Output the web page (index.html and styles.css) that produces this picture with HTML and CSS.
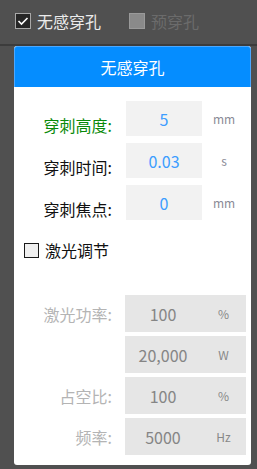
FILE: index.html
```html
<!DOCTYPE html>
<html lang="zh">
<head>
    <meta charset="UTF-8">
    <title>无感穿孔</title>
    <link rel="stylesheet" href="styles.css">
</head>
<body>
    <div class="topbar">
        <label class="top-check">
            <span class="box checked">
                <svg width="12" height="10" viewBox="0 0 12 10"><path d="M1.5 5 L4.5 8 L10.5 2" fill="none" stroke="#fff" stroke-width="1.6"/></svg>
            </span>
            <span>无感穿孔</span>
        </label>
        <label class="top-check disabled">
            <span class="box"></span>
            <span>预穿孔</span>
        </label>
    </div>

    <div class="panel">
        <div class="panel-head">无感穿孔</div>
        <div class="panel-body">
            <div class="rows">
                <div class="row">
                    <div class="label green">穿刺高度:</div>
                    <div class="field">
                        <div class="value">5</div>
                        <div class="unit">mm</div>
                    </div>
                </div>
                <div class="row">
                    <div class="label">穿刺时间:</div>
                    <div class="field">
                        <div class="value">0.03</div>
                        <div class="unit">s</div>
                    </div>
                </div>
                <div class="row">
                    <div class="label">穿刺焦点:</div>
                    <div class="field">
                        <div class="value">0</div>
                        <div class="unit">mm</div>
                    </div>
                </div>
            </div>

            <label class="check">
                <span class="check-box"></span>
                <span>激光调节</span>
            </label>

            <div class="rows off">
                <div class="row">
                    <div class="label">激光功率:</div>
                    <div class="field">
                        <div class="value">100</div>
                        <div class="unit">%</div>
                    </div>
                </div>
                <div class="row">
                    <div class="label"></div>
                    <div class="field">
                        <div class="value">20,000</div>
                        <div class="unit">W</div>
                    </div>
                </div>
                <div class="row">
                    <div class="label">占空比:</div>
                    <div class="field">
                        <div class="value">100</div>
                        <div class="unit">%</div>
                    </div>
                </div>
                <div class="row">
                    <div class="label">频率:</div>
                    <div class="field">
                        <div class="value">5000</div>
                        <div class="unit">Hz</div>
                    </div>
                </div>
            </div>
        </div>
    </div>
</body>
</html>
```

FILE: styles.css
```css
* {
    margin: 0;
    padding: 0;
    box-sizing: border-box;
}

body {
    background: #505050;
    font-family: "Noto Sans CJK SC", "Noto Sans", sans-serif;
    width: 257px;
    height: 469px;
    overflow: hidden;
}

.topbar {
    height: 46px;
    display: flex;
    align-items: center;
    padding: 0 0 2px 15px;
    border-bottom: 2px solid #3c3c3c;
}

.top-check {
    display: flex;
    align-items: center;
    gap: 6px;
    font-size: 16px;
    line-height: 20px;
    color: #ececec;
    margin-right: 28px;
}

.top-check .box {
    width: 16px;
    height: 16px;
    border: 1px solid #a8a8a8;
    background: #262626;
    display: flex;
    align-items: center;
    justify-content: center;
}

.top-check.disabled {
    color: #6b6b6b;
}

.top-check.disabled .box {
    background: #8a8a8a;
    border-color: #9a9a9a;
}

.panel {
    margin: 0 6px 0 14px;
    background: #fff;
    border-radius: 3px;
    height: 419px;
    overflow: hidden;
}

.panel-head {
    height: 41px;
    background: #058dff;
    border: 1px solid #4ba8ff;
    border-bottom: none;
    border-radius: 3px 3px 0 0;
    color: #fff;
    font-size: 16px;
    display: flex;
    align-items: center;
    justify-content: center;
}

.panel-body {
    padding-top: 14px;
}

.rows {
    display: flex;
    flex-direction: column;
    gap: 7px;
}

.row {
    display: flex;
    height: 35px;
}

.label {
    width: 98px;
    margin-right: 13px;
    text-align: right;
    font-size: 16px;
    line-height: 20px;
    color: #111;
    align-self: flex-end;
    padding-bottom: 1px;
}

.label.green {
    color: #0a8a0a;
}

.field {
    display: flex;
    width: 121px;
}

.value {
    width: 76px;
    margin-left: 1px;
    background: #f2f2f2;
    color: #3d9dff;
    font-size: 16px;
    display: flex;
    align-items: center;
    justify-content: center;
}

.unit {
    flex: 1;
    display: flex;
    align-items: center;
    justify-content: center;
    font-size: 12px;
    color: #8a8a96;
}

.check {
    display: flex;
    align-items: center;
    gap: 6px;
    margin: 20px 0 0 10px;
    height: 20px;
    font-size: 16px;
    color: #111;
}

.check-box {
    width: 15px;
    height: 15px;
    border: 1px solid #1a1a1a;
    background: #f0f0f0;
}

.rows.off {
    margin-top: 35px;
    gap: 4px;
}

.off .row {
    height: 37px;
}

.off .label {
    align-self: center;
    color: #b4b4b4;
    padding-bottom: 0;
}

.off .field {
    background: #e6e6e6;
}

.off .value {
    background: none;
    margin-left: 0;
    color: #858585;
}

.off .unit {
    color: #888;
}
```
